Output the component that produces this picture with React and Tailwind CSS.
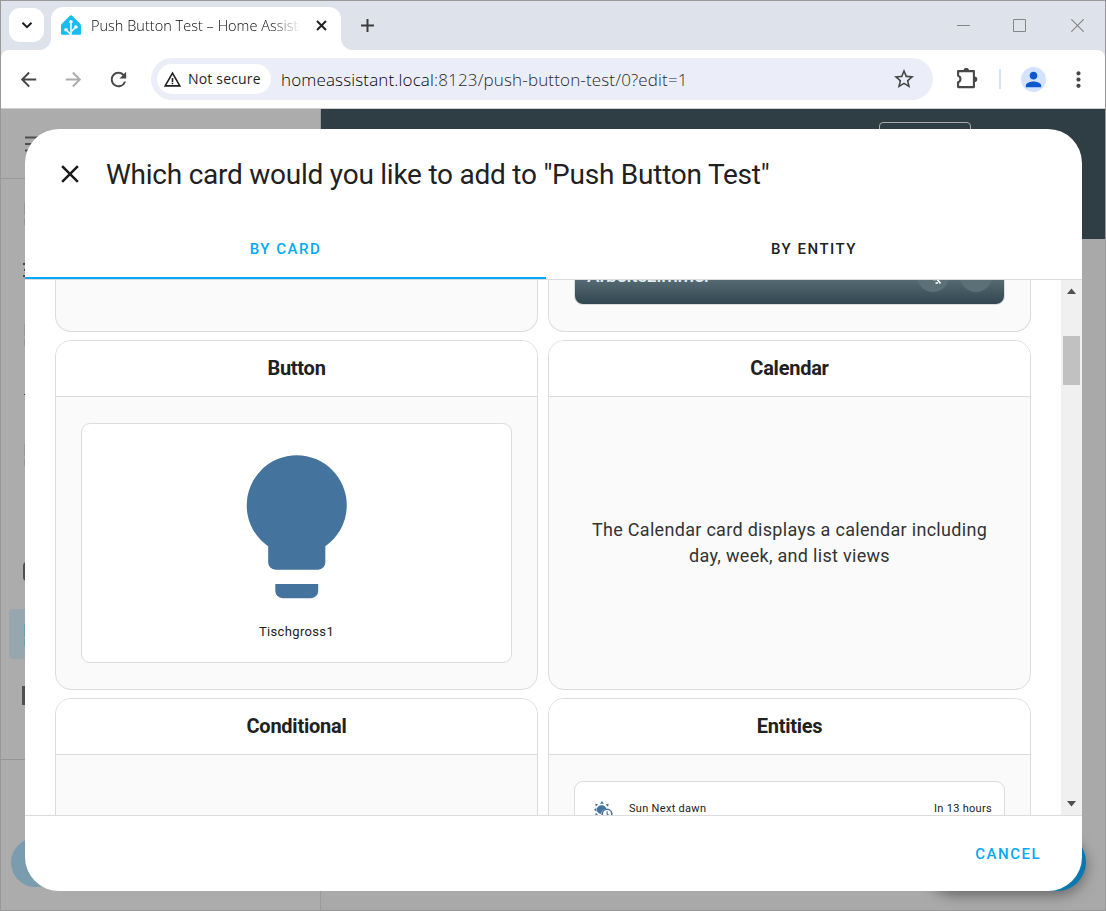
import React from "react";
import { SiHomeassistant } from "react-icons/si";
import { MdArrowBack, MdArrowForward, MdRefresh, MdStarOutline, MdPerson, MdWarningAmber, MdMoreVert } from "react-icons/md";

function TitleBar() {
  return (
    <div className="flex h-[49px] shrink-0 items-start bg-[#dee2ea] pl-2">
      <button className="mt-[7px] flex h-[34px] w-[35px] items-center justify-center rounded-[11px] bg-white">
        <svg width="12" height="12" viewBox="0 0 12 12" fill="none" stroke="#1f1f1f" strokeWidth="2">
          <path d="M1.500 3.800 6 8.200l4.500-4.400" />
        </svg>
      </button>
      <div className="relative ml-[7px] mt-[6px] flex h-[43px] w-[290px] items-center rounded-t-[12px] bg-white pb-[7px] pl-[10px]">
        <svg className="absolute -left-3 bottom-0" width="12" height="12"><path d="M0 12A12 12 0 0 0 12 0V12Z" fill="#fff" /></svg>
        <svg className="absolute -right-3 bottom-0" width="12" height="12"><path d="M12 12A12 12 0 0 1 0 0V12Z" fill="#fff" /></svg>
        <SiHomeassistant className="size-5 text-[#18bcf2]" />
        <span className="ml-[10px] mt-px w-[210px] overflow-hidden whitespace-nowrap bg-gradient-to-r from-[#0a0a0a] from-[86%] to-transparent bg-clip-text font-['Open_Sans',sans-serif] text-[14.500px] font-light tracking-[0.020px] text-transparent">
          Push Button Test – Home Assist
        </span>
        <svg className="ml-[15px]" width="11" height="11" viewBox="0 0 11 11" stroke="#1f1f1f" strokeWidth="1.900">
          <path d="M1 1l9 9M10 1l-9 9" />
        </svg>
      </div>
      <svg className="ml-[20px] mt-[18px]" width="13" height="13" viewBox="0 0 13 13" stroke="#3c3c3c" strokeWidth="2">
        <path d="M6.500 0v13M0 6.500h13" />
      </svg>
      <div className="ml-auto mr-[21px] mt-[18px] flex gap-[43px] text-[#868686]">
        <svg className="-translate-x-[2px]" width="13" height="13" viewBox="0 0 13 13" stroke="currentColor"><path d="M0 6.500h13" /></svg>
        <svg className="-translate-x-[2px]" width="13" height="13" viewBox="0 0 13 13" fill="none" stroke="currentColor"><path d="M.5.5h12v12H.5z" /></svg>
        <svg width="13" height="13" viewBox="0 0 13 13" fill="none" stroke="currentColor" strokeWidth="1.200"><path d="M.3.300l12.400 12.400M12.700.300L.3 12.700" /></svg>
      </div>
    </div>
  );
}

function Toolbar() {
  return (
    <div className="bg-[#dee2ea]">
      <div className="flex h-[58px] items-center rounded-t-[8px] bg-white pl-[16px] text-[#474747]">
        <MdArrowBack className="size-[23px]" />
        <MdArrowForward className="ml-[22px] size-[23px] text-[#ababab]" />
        <MdRefresh className="ml-[22px] size-[23px]" />
        <div className="ml-[21px] flex h-[42px] w-[782px] items-center rounded-full bg-[#ebeef8] pl-[6px] pr-[17px] font-['Open_Sans',sans-serif]">
          <div className="flex h-[30px] w-[114px] shrink-0 items-center rounded-full bg-white pl-[6px] text-[#1f1f1f]">
            <MdWarningAmber className="size-[19px] shrink-0" />
            <span className="-mt-px ml-[6px] whitespace-nowrap text-[14px] tracking-[0.180px]">Not secure</span>
          </div>
          <span className="ml-[10px] mt-px whitespace-nowrap text-[17px] font-light tracking-[0.150px] text-[#2a2a2a]">
            <span className="text-[#050505]">homeassistant.local</span>:8123/push-button-test/0?edit=1
          </span>
          <MdStarOutline className="ml-auto size-6" />
        </div>
        <svg className="ml-[23px]" width="22" height="22" viewBox="0 0 22 22" fill="#474747">
          <path d="M2.100 3.100h15.800v16H2.100v-4.800a3.500 3.500 0 0 0 0-6.600z" fill="none" stroke="#474747" strokeWidth="2.100" strokeLinejoin="round" />
          <path d="M7.600 2.500a2.700 2.700 0 0 1 5.400 0zM18.500 8.500a2.800 2.800 0 0 1 0 5.600z" />
        </svg>
        <div className="ml-[21px] h-[20px] w-[2px] bg-[#d3e3fd]" />
        <div className="ml-[20px] flex size-[25px] items-center justify-center rounded-full bg-[#d3e3fd]">
          <MdPerson className="size-[23px] text-[#0b57d0]" />
        </div>
        <MdMoreVert className="ml-[20px] size-[25px] shrink-0" />
      </div>
    </div>
  );
}

function Backdrop() {
  return (
    <div className="flex h-full">
      <div className="relative w-[320px] border-r border-[#9a9a9a] bg-[#acacac]">
        <div className="h-[70px] border-b border-[#999]" />
        <svg className="absolute left-[24px] top-[26px]" width="20" height="20" stroke="#4d4d4d" strokeWidth="2">
          <path d="M0 2.500h20M0 9h20M0 15.500h20" />
        </svg>
        <svg className="absolute left-[22px] top-[154px]" width="8" height="18" fill="#454545">
          <path d="M0 0h3v2H0zM1 6h2v2H1zM0 12h3v2H0z" />
        </svg>
        <div className="absolute left-[23px] top-[94px] h-[12px] w-[2px] bg-[#979797]" />
        <div className="absolute left-[23px] top-[109px] h-[7px] w-[2px] bg-[#979797]" />
        <div className="absolute left-[23px] top-[215px] h-[12px] w-[2px] bg-[#979797]" />
        <div className="absolute left-[23px] top-[230px] h-[7px] w-[2px] bg-[#979797]" />
        <div className="absolute left-[23px] top-[285px] h-px w-[2px] bg-[#454545]" />
        <div className="absolute left-[23px] top-[335px] h-[12px] w-[2px] bg-[#979797]" />
        <div className="absolute left-[23px] top-[350px] h-[7px] w-[2px] bg-[#979797]" />
        <div className="absolute left-[22px] top-[453px] h-[19px] w-[6px] rounded-l-sm bg-[#505050]" />
        <div className="absolute left-[8px] top-[500px] h-[50px] w-[60px] rounded bg-[#97a7af]">
          <div className="ml-[15px] mt-[15px] h-[13px] w-1 bg-[#6d9bb0]" />
          <div className="ml-[15px] mt-[2px] h-[7px] w-1 bg-[#6d9bb0]" />
        </div>
        <div className="absolute left-[21px] top-[577px] h-[19px] w-[6px] bg-[#505050]" />
        <div className="absolute left-0 top-[650px] h-px w-full bg-[#959595]" />
        <div className="absolute left-[10px] top-[729px] size-[49px] rounded-full bg-[#7a9cae]" />
      </div>
      <div className="relative flex-1 overflow-hidden bg-[#a9a9a9]">
        <div className="h-[130px] bg-[#2f3d44]" />
        <div className="absolute left-[558px] top-[13px] h-9 w-[92px] rounded border border-[#aaa]" />
        <div className="absolute left-[605px] top-[724px] h-[58px] w-[160px] rounded-full bg-[#0878b0] shadow-[0_4px_14px_0px_rgba(0,0,0,0.4)]" />
      </div>
    </div>
  );
}

function Card({ title, children }) {
  return (
    <section className="flex h-[350px] flex-col overflow-hidden rounded-[16px] border border-[#dcdcdc] bg-[#fafafa]">
      <h2 className="flex h-[56px] shrink-0 items-center justify-center border-b border-[#dcdcdc] bg-white pb-[2px] text-[20px] font-bold tracking-[-0.250px] text-[#212121]">
        {title}
      </h2>
      <div className="flex flex-1 flex-col px-[25px] pb-[26px] pt-[26px]">{children}</div>
    </section>
  );
}

function CardTail({ children }) {
  return (
    <section className="flex h-[52px] flex-col justify-end rounded-b-[16px] border border-t-0 border-[#dcdcdc] bg-[#fafafa] px-[25px] pb-[26px]">
      {children}
    </section>
  );
}

function AreaPreview() {
  return (
    <div className="flex h-[60px] shrink-0 items-end justify-between rounded-[9px] border border-[#dcdcdc] bg-linear-to-t from-[#314650] via-[#566b74] via-[42%] to-[#70858e] px-[12px] pb-[12px]">
      <span className="pb-[2px] text-[19px] font-medium tracking-[-0.150px] text-[#e1edf2]">Arbeitszimmer</span>
      <div className="flex gap-[11px]">
        <div className="relative size-8 rounded-full bg-[#5c7078]">
          <svg className="absolute bottom-[7px] right-[8px]" width="9" height="7" fill="none" stroke="#fff" strokeWidth="1.700"><path d="M1 1.500h3M3.500 5h2.500M4 0l4.500 5.500" /></svg>
        </div>
        <div className="size-8 rounded-full bg-[#5c7078]" />
      </div>
    </div>
  );
}

function SunClock() {
  return (
    <svg width="19" height="19" viewBox="0 0 24 24" fill="#44739e">
      <path d="M10 0 7.500 3.500h5zM1.500 3.500 5.200 4.200 2.300 7.200zM18.500 3.500 17.700 7.200 14.800 4.200zM0 11l3-2.500v5zM1.500 18.500l.8-3.700 2.900 3zM10 22l-2.500-4H10z" />
      <path d="M10 5.500a5.500 5.500 0 1 0-1 10.900A7 7 0 0 1 15.400 10 5.500 5.500 0 0 0 10 5.500z" />
      <circle cx="16.500" cy="16.500" r="6" fill="none" stroke="#44739e" strokeWidth="2" />
      <path d="M15.800 13h1.500v3.300l2.700 1.500-.8 1.300-3.400-2z" />
    </svg>
  );
}

function Dialog() {
  return (
    <div className="absolute left-[25px] top-[129px] flex h-[762px] w-[1057px] flex-col overflow-hidden rounded-[34px] bg-white font-['Roboto',sans-serif] text-[#212121]">
      <div className="flex h-[90px] shrink-0 items-center pl-[30px]">
        <svg width="30" height="30" viewBox="0 0 24 24" fill="#1c1c1c">
          <path d="M19,6.410L17.590,5L12,10.590L6.410,5L5,6.410L10.590,12L5,17.590L6.410,19L12,13.410L17.590,19L19,17.590L13.410,12L19,6.410Z" />
        </svg>
        <h1 className="ml-[21px] mt-[2px] whitespace-nowrap text-[28px] tracking-[-0.240px]">Which card would you like to add to "Push Button Test"</h1>
      </div>
      <div className="flex h-[61px] shrink-0 border-b border-[#dcdcdc] text-[15px] font-medium tracking-[1.500px]">
        <div className="flex w-[521px] items-center justify-center border-b-2 border-[#03a9f4] pt-[2px] text-[#03a9f4]">BY CARD</div>
        <div className="flex flex-1 items-center justify-center">BY ENTITY</div>
      </div>
      <div className="flex min-h-0 flex-1">
        <div className="flex-1 overflow-hidden">
          <div className="grid grid-cols-[483px_483px] gap-x-[10px] gap-y-2 pl-[30px]">
            <CardTail />
            <CardTail><AreaPreview /></CardTail>
            <Card title="Button">
              <div className="flex h-[240px] shrink-0 flex-col items-center rounded-[9px] border border-[#dcdcdc] bg-white pt-[17px]">
                <svg className="shrink-0" width="171.500" height="171.500" viewBox="0 0 24 24" fill="#44739e">
                  <path d="M12,2A7,7 0 0,0 5,9C5,11.380 6.190,13.470 8,14.740V17A1,1 0 0,0 9,18H15A1,1 0 0,0 16,17V14.740C17.810,13.470 19,11.380 19,9A7,7 0 0,0 12,2M9,21A1,1 0 0,0 10,22H14A1,1 0 0,0 15,21V20H9V21Z" />
                </svg>
                <span className="mt-[9.500px] text-[13px] leading-5 tracking-[0.350px]">Tischgross1</span>
              </div>
            </Card>
            <Card title="Calendar">
              <p className="my-auto text-center text-[18px] leading-[26px] tracking-[0.300px] text-[#333]">
                The Calendar card displays a calendar including<br />day, week, and list views
              </p>
            </Card>
            <Card title="Conditional" />
            <Card title="Entities">
              <div className="flex flex-1 items-start rounded-[9px] border border-[#dcdcdc] bg-white pl-[19px] pr-[12px] pt-[19px] text-[11px] leading-4 tracking-[0.300px]">
                <div className="w-[35px]"><SunClock /></div>
                <span>Sun Next dawn</span>
                <span className="ml-auto">In 13 hours</span>
              </div>
            </Card>
          </div>
        </div>
        <div className="flex w-[21px] flex-col items-center bg-[#f0f0f0]">
          <svg className="mt-[8px]" width="9" height="6" fill="#505050"><path d="M0 6 4.500 .5 9 6z" /></svg>
          <div className="mt-[42px] h-[49px] w-[17px] bg-[#c1c1c1]" />
          <svg className="mb-[8px] mt-auto" width="9" height="6" fill="#505050"><path d="M0 0h9L4.500 5.500z" /></svg>
        </div>
      </div>
      <div className="flex h-[76px] shrink-0 items-center justify-end border-t border-[#dcdcdc] pr-[41px] pt-[2px] text-[15px] font-medium tracking-[1.500px] text-[#03a9f4]">
        CANCEL
      </div>
    </div>
  );
}

export default function App() {
  return (
    <div className="relative flex h-[911px] w-[1106px] flex-col overflow-hidden border border-[#999]">
      <TitleBar />
      <Toolbar />
      <div className="min-h-0 flex-1 border-t border-[#c9cfcc]"><Backdrop /></div>
      <div className="absolute -left-px -top-px"><Dialog /></div>
    </div>
  );
}
